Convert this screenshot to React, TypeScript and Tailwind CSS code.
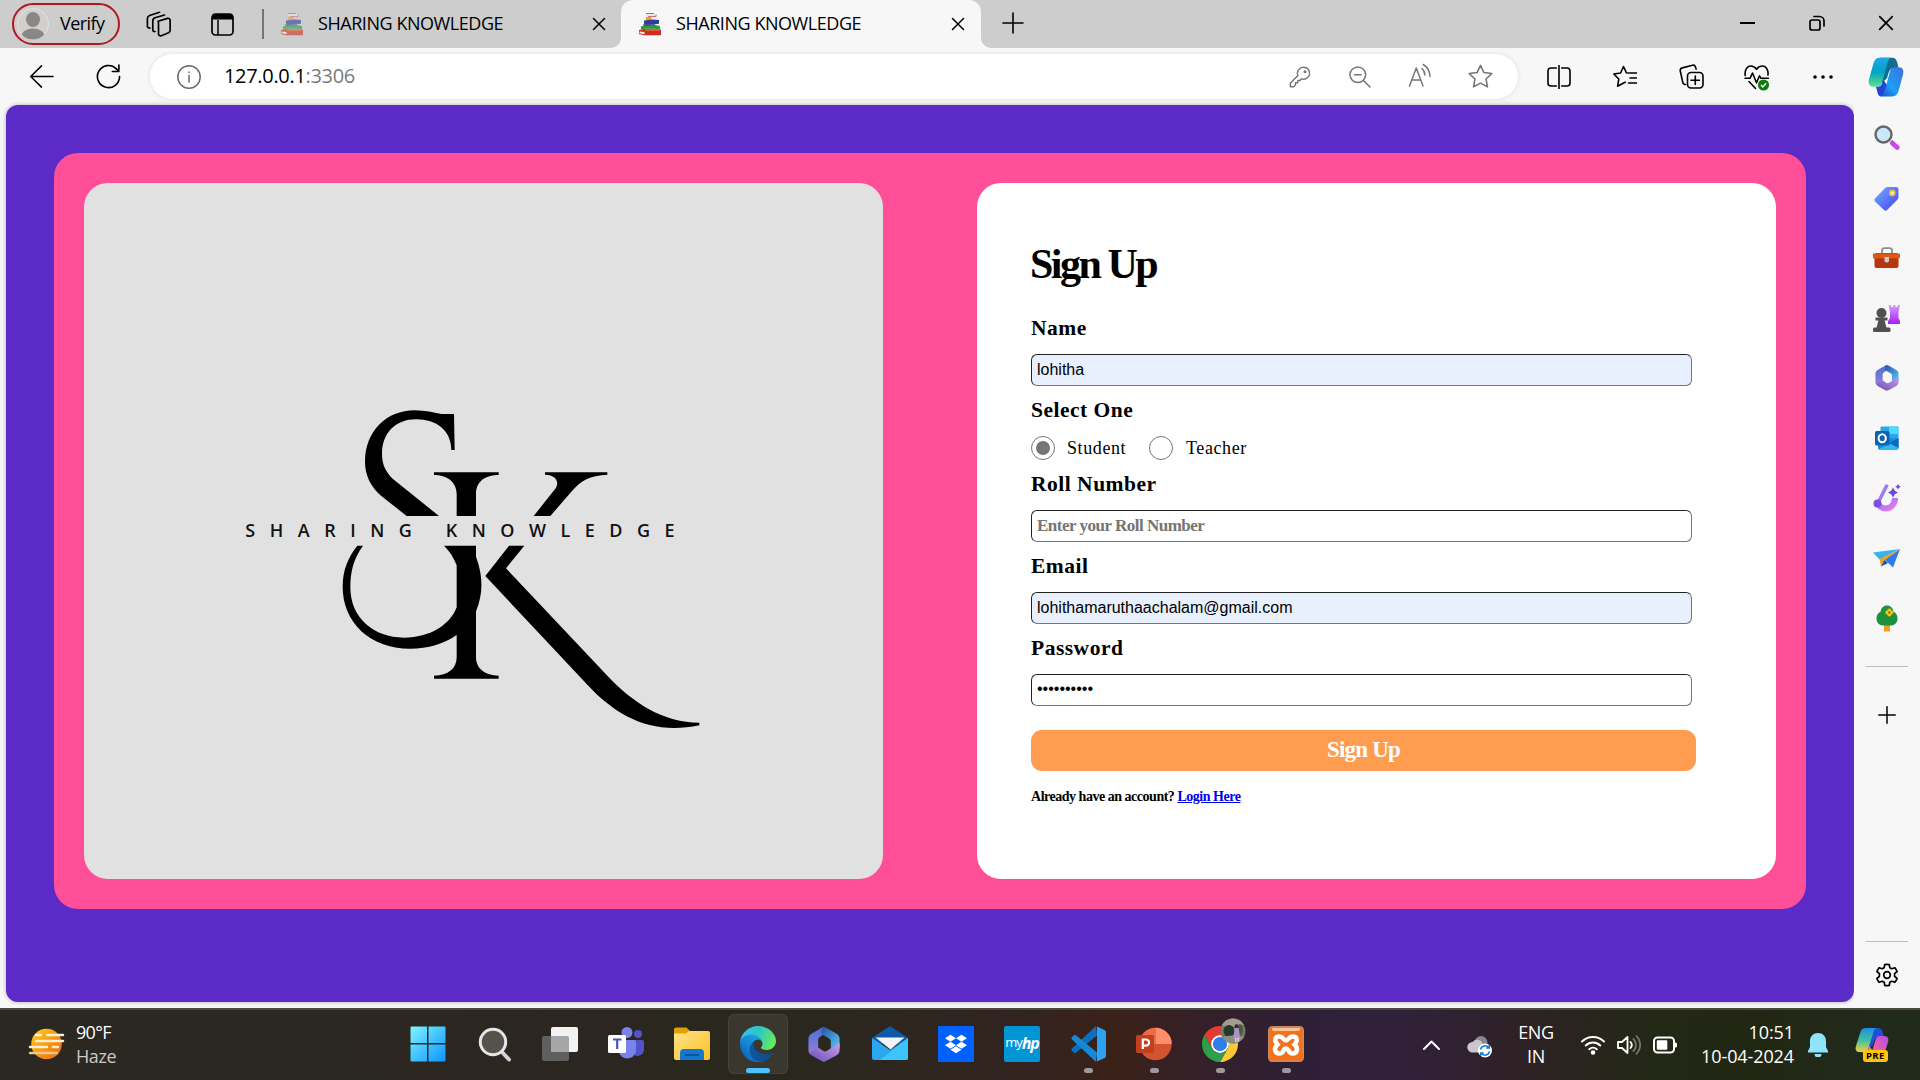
import React from "react";
import { FaDropbox } from "react-icons/fa";

type IconProps = { className?: string; children: React.ReactNode; box?: string; sw?: number };

/* Thin outlined glyph used by the browser chrome. */
function Line({ className = "size-6", children, box = "0 0 24 24", sw = 1.6 }: IconProps) {
  return (
    <svg viewBox={box} className={className} fill="none" stroke="currentColor" strokeWidth={sw} strokeLinecap="round" strokeLinejoin="round">
      {children}
    </svg>
  );
}

function Art({ className = "size-6", children, box = "0 0 24 24" }: IconProps) {
  return (
    <svg viewBox={box} className={className}>
      {children}
    </svg>
  );
}

function Cell({ className, children }: { className: string; children: React.ReactNode }) {
  return <div className={`flex shrink-0 items-center justify-center ${className}`}>{children}</div>;
}

function Books({ className = "" }: { className?: string }) {
  return (
    <Art className={`h-[24px] w-[24px] ${className}`}>
      <path d="M8 1.2h7l3 1v2.6h-8l-2-1z" fill="#f3e3e3" />
      <path d="M8 1.5h8M10 4.6h8V2.6" stroke="#d4607a" strokeWidth="1" fill="none" />
      <path d="M8 5h5l1 3.2H8z" fill="#e9a21d" />
      <path d="M6 8.4l9-.9 6 .6v3.6l-13 1.2-2-1.4z" fill="#2b3f9a" />
      <path d="M5 12.2h12l1 2.8H6z" fill="#3d4890" />
      <path d="M3 14.2l14-1.2 5 1v3l-15 1.6-4-1.5z" fill="#2b9a3a" />
      <path d="M6 16.8l12 0v1H6z" fill="#e6f0e6" />
      <path d="M1 18l5-1 17 .4v5.8H6l-5-1.2z" fill="#c9301e" />
      <path d="M1.5 19.6l5 .5v2.2l-5-1z" fill="#fbe7e2" />
      <path d="M7 17.4h15v1.6H7z" fill="#e4563d" />
    </Art>
  );
}

function CloseX({ className = "size-3.5" }: { className?: string }) {
  return (
    <Line className={className} box="0 0 14 14" sw={1.5}>
      <path d="M1.5 1.5l11 11M12.5 1.5l-11 11" />
    </Line>
  );
}

function TabStrip() {
  return (
    <div className="flex h-12 shrink-0 items-stretch bg-[#cdcdcd] pl-3">
      <div className="mt-[3px] flex h-[42px] w-[108px] items-center rounded-full border-2 border-[#ae1a1f] pl-[3px]">
        <Art className="size-8" box="0 0 32 32">
          <circle cx="16" cy="16" r="15.5" fill="#d2d0ce" stroke="#e4e2e0" />
          <clipPath id="av"><circle cx="16" cy="16" r="15.5" /></clipPath>
          <g fill="#8a8886" clipPath="url(#av)">
            <ellipse cx="16" cy="11.5" rx="7" ry="7.5" />
            <ellipse cx="16" cy="28.5" rx="11.5" ry="8" />
          </g>
        </Art>
        <span className="mb-px ml-[11px] text-[18px] tracking-[-0.55px]">Verify</span>
      </div>
      <Cell className="w-[78px]">
        <Line className="size-[26px]" box="0 0 26 26" sw={1.7}>
          <path d="M12 10.2l9.5-2.8c1.4-.4 2.6.4 2.6 1.8v10.3c0 1-.5 1.8-1.5 2.2l-7.3 3c-1.4.5-2.8-.3-2.8-1.7V13c0-1.4 0-2.4-.5-2.8z" />
          <path d="M9 20.5c-1.5.3-2.2-.5-2.2-1.8V10c0-1.5.8-2.7 2.2-3.2L18.500 4" />
          <path d="M4 17c-1.5.3-2.6-.6-2.6-2V7.500C1.400 6 2.200 5 3.600 4.500L13.500 1.300" />
        </Line>
      </Cell>
      <Cell className="w-12">
        <Art className="size-[23px]" box="0 0 23 23">
          <rect x="1" y="1" width="21" height="21" rx="3.5" fill="none" stroke="#000" strokeWidth="1.7" />
          <path d="M1 6.500V4a3 3 0 013-3h15a3 3 0 013 3v2.500z" />
          <path d="M7 7v15" stroke="#000" strokeWidth="1.5" />
        </Art>
      </Cell>
      <Cell className="w-[34px]">
        <div className="h-[30px] w-[2px] bg-[#757575]" />
      </Cell>
      <div className="flex w-[341px] items-center pr-[15px]">
        <Books className="opacity-60" />
        <span className="mb-0.5 ml-3.5 text-[18px] tracking-[-0.45px]">SHARING KNOWLEDGE</span>
        <CloseX className="ml-auto size-3.5" />
      </div>
      <div className="relative flex w-[360px] items-center rounded-t-[12px] bg-[#f7f7f7] pr-4 pl-[17px]">
        <Art className="absolute bottom-0 -left-[10px] size-[10px]" box="0 0 10 10">
          <path d="M10 0v10H0A10 10 0 0010 0z" fill="#f7f7f7" />
        </Art>
        <Art className="absolute -right-[10px] bottom-0 size-[10px]" box="0 0 10 10">
          <path d="M0 0v10h10A10 10 0 010 0z" fill="#f7f7f7" />
        </Art>
        <Books />
        <span className="mb-0.5 ml-3.5 text-[18px] tracking-[-0.45px]">SHARING KNOWLEDGE</span>
        <CloseX className="ml-auto size-3.5" />
      </div>
      <Cell className="w-16 pb-0.5">
        <Line className="size-[22px]" box="0 0 22 22">
          <path d="M11 1v20M1 11h20" />
        </Line>
      </Cell>
      <Cell className="ml-auto w-[69px] pb-0.5">
        <div className="h-[2px] w-[15px] bg-black" />
      </Cell>
      <Cell className="w-[69px] pb-0.5">
        <Line className="size-4" box="0 0 16 16" sw={1.7}>
          <rect x="1" y="5" width="10" height="10" rx="2" />
          <path d="M5 1.500h5.500a4.500 4.500 0 014.500 4.500v5" />
        </Line>
      </Cell>
      <Cell className="w-[69px] pb-0.5">
        <CloseX className="size-4" />
      </Cell>
    </div>
  );
}

function Copilot({ id, c }: { id: string; c: string[] }) {
  return (
    <>
      <defs>
        <linearGradient id={`${id}a`} x1="0" y1="0" x2="0" y2="1">
          <stop offset="0" stopColor={c[0]} /><stop offset=".5" stopColor={c[1]} /><stop offset="1" stopColor={c[2]} />
        </linearGradient>
        <linearGradient id={`${id}b`} x1="1" y1="0" x2="0" y2="1">
          <stop offset="0" stopColor={c[3]} /><stop offset=".6" stopColor={c[4]} /><stop offset="1" stopColor={c[5]} />
        </linearGradient>
      </defs>
      <path d="M12 1h12c3 0 4.500 1.500 5.300 4.500L30.500 10H26c-3 0-4.500 1.500-5.500 4.500L19 19l-5 4z" fill={c[6]} />
      <path d="M12 1h12c-2.500 0-3.500 1.500-4.500 4.500L14 23c-.8 2.500-2 3.500-4.500 3.500H5c-4 0-5-3-4-6.500L5.500 6C6.600 2.500 8.500 1 12 1z" fill={`url(#${id}a)`} />
      <path d="M13 35h11c3.500 0 5.500-1.500 6.600-5L35 16c1-3.500 0-6.500-4-6.500h-4.500c-2.500 0-3.700 1-4.500 3.500L16.500 30.500c-1 3-2 4.500-4.500 4.500z" fill={`url(#${id}b)`} />
      <path d="M13 35c-2.500 0-3-1.500-3.700-4L8 26.500h2c2.500 0 3.500-1 4.200-3.500l1-3 3.500 5-2.200 6c-1 3-2 4-3.500 4z" fill={c[5]} />
    </>
  );
}

function Toolbar() {
  return (
    <div className="flex h-[57px] shrink-0 items-center bg-[#f7f7f7] pl-2">
      <Cell className="w-[67px]">
        <Line className="size-[25px]" box="0 0 26 26">
          <path d="M25 13H2M13 2L1.800 13 13 24" />
        </Line>
      </Cell>
      <Cell className="w-[66px]">
        <Line className="size-[25px]" box="0 0 26 26" sw={1.7}>
          <path d="M24.500 13A11.500 11.500 0 1121 4.800L23.500 7.500M23.800 1v6.800H17" />
        </Line>
      </Cell>
      <div className="ml-[9px] flex h-[45px] w-[1368px] items-center rounded-full bg-white pr-2 pl-[27px] shadow-[0_0_5px_rgba(0,0,0,0.1)]">
        <Line className="size-6 text-[#6a6a6a]" sw={1.5}>
          <circle cx="12" cy="12" r="11.2" />
          <path d="M12 10.500v6.500M12 7v.4" />
        </Line>
        <span className="mb-px ml-[23px] text-[20px] tracking-[-0.32px] text-black">
          127.0.0.1<span className="text-[#7a7a7a]">:3306</span>
        </span>
        <div className="ml-auto flex text-[#757575]">
          <Cell className="w-[60px]">
            <Line className="size-[22px]" box="0 0 22 22" sw={1.4}>
              <path d="M14.500 1.200a6 6 0 11-2 11.600L11 14.500H8.800v2.300H6.500v2.200L4.600 20.800H1.300v-3.600L8.900 9.500a6 6 0 015.600-8.300z" />
              <circle cx="16" cy="5.8" r=".8" />
            </Line>
          </Cell>
          <Cell className="w-[60px]">
            <Line className="size-[22px]" box="0 0 22 22" sw={1.5}>
              <circle cx="8.8" cy="8.8" r="7.8" />
              <path d="M14.500 14.500L21 21M5.500 8.800h6.600" />
            </Line>
          </Cell>
          <Cell className="w-[60px] pb-[3px]">
            <Line className="h-6 w-6" box="0 0 24 24" sw={1.5}>
              <path d="M1.500 23L8.300 5l6.700 18M4 17h8.700M13.800 5.500c2 1.400 3 3.800 3 6.500M15.300 1.500c4 2.400 6.500 6.500 6.700 12" />
            </Line>
          </Cell>
          <Cell className="w-[60px]">
            <Star className="size-[25px]" />
          </Cell>
        </div>
      </div>
      <Cell className="ml-2 w-[66px]">
        <Line className="size-6">
          <path d="M9.300 3H4a3 3 0 00-3 3v12a3 3 0 003 3h5.300M14.700 3H20a3 3 0 013 3v12a3 3 0 01-3 3h-5.300M12 .5v23" />
        </Line>
      </Cell>
      <Cell className="w-[66px]">
        <Line className="size-6">
          <path d="M15.500 8h8M17 13h6.500M15.500 18h8M14 8l-.7-.4L10.500 1.500 7.600 8 .8 9l5 5-1.200 7.200 6-3.200 1.600-.8" />
        </Line>
      </Cell>
      <Cell className="w-[66px]">
        <Line className="size-[25px]" box="0 0 25 25">
          <rect x="8.5" y="8.5" width="15.5" height="15.5" rx="3.5" />
          <path d="M16.300 12v8.500M12 16.300h8.500M6.500 20.500c-1.500 0-2.400-.8-2.700-2.200L1.300 7.200C.9 5.500 1.700 4.300 3.300 3.900L13.500 1.200c1.500-.4 2.500.3 3 1.700l.6 2.200" />
        </Line>
      </Cell>
      <Cell className="w-[66px]">
        <Art className="mt-0.5 size-[26px]" box="0 0 26 26">
          <g fill="none" stroke="#000" strokeWidth="1.6" strokeLinejoin="round" strokeLinecap="round">
            <path d="M1.200 10.500C.4 5.500 3 1 6.800 1c2.600 0 4.400 1.300 5.700 3.200C13.800 2.300 15.800 1 18.400 1c3.800 0 6.300 4.500 5.500 9M5 16.500l6.500 7" />
            <path d="M1 13.300h5L8.500 8l4 9.800 3-7 1.500 2.500h7.500" />
          </g>
          <circle cx="19.5" cy="20" r="5.6" fill="#0f7b0f" />
          <path d="M17 20l1.800 1.900 3.300-3.700" fill="none" stroke="#fff" strokeWidth="1.4" />
        </Art>
      </Cell>
      <Cell className="w-[66px]">
        <Art className="h-1 w-5" box="0 0 20 4">
          <circle cx="2" cy="2" r="1.8" /><circle cx="10" cy="2" r="1.8" /><circle cx="18" cy="2" r="1.8" />
        </Art>
      </Cell>
      <Cell className="w-[60px]">
        <Art className="h-[42px] w-9" box="0 0 36 36">
          <g transform="translate(0 -2.500) scale(1 1.140)">
            <Copilot id="cp" c={["#1fa7e8", "#00a3c4", "#5fe08a", "#3f6fe0", "#18a0f5", "#2446d8", "#116d8f"]} />
          </g>
        </Art>
      </Cell>
    </div>
  );
}

function Star({ className }: { className: string }) {
  return (
    <Line className={className} sw={1.5}>
      <path d="M12 1.300l3.300 6.900 7.500 1-5.500 5.200 1.400 7.600L12 18.400 5.300 22l1.400-7.600L1.200 9.200l7.500-1z" />
    </Line>
  );
}

function Hexagon365({ className }: { className: string }) {
  return (
    <Art className={className} box="0 0 32 36">
      <defs>
        <linearGradient id="m1" x1="0" y1="0" x2="0" y2="1"><stop offset="0" stopColor="#4a6fd8" /><stop offset="1" stopColor="#9a7fd6" /></linearGradient>
        <linearGradient id="m2" x1="0" y1="0" x2="1" y2="1"><stop offset="0" stopColor="#2a4ea8" /><stop offset="1" stopColor="#5fd0f5" /></linearGradient>
        <linearGradient id="m3" x1="0" y1="1" x2="1" y2="0"><stop offset="0" stopColor="#6a4fb0" /><stop offset="1" stopColor="#c79cf0" /></linearGradient>
      </defs>
      <path d="M15 0L3 7C1 8.200 0 10 0 12v12c0 2 1 3.500 2.500 4.500L10 24V13.500c0-1.500.5-2.500 2-3.500l6-4V1z" fill="url(#m1)" />
      <path d="M14 1c1.500-1 3-1 4.500 0L29 7c2 1.200 3 3 3 5v10l-9 2V15c0-1.500-.7-2.700-2-3.500L13 7z" fill="url(#m2)" />
      <path d="M1.500 26L10 21l5 3.500c1.300.9 2.700.9 4 0l8-5 5-3v7.500c0 2-1 3.800-3 5L18 35c-1.500.9-3 .9-4.500 0L3 29z" fill="url(#m3)" />
    </Art>
  );
}

function Sidebar() {
  return (
    <div className="flex w-[65px] shrink-0 flex-col items-center bg-[#f7f7f7] pt-[3px]">
      <Cell className="h-[60px]">
        <Art className="size-[26px]" box="0 0 26 26">
          <path d="M17 16l3 2.600" stroke="#8a8a8a" strokeWidth="3" />
          <path d="M18.500 18.300l4.700 4.200" stroke="#c945ec" strokeWidth="4.800" strokeLinecap="round" />
          <circle cx="9.500" cy="9.500" r="8" fill="#c9e8fb" stroke="#666" strokeWidth="2.400" />
        </Art>
      </Cell>
      <Cell className="h-[60px]">
        <Art className="size-[25px]" box="0 0 25 25">
          <defs><linearGradient id="tg" x1="0" y1="0" x2="1" y2="1"><stop offset="0" stopColor="#6cb4ff" /><stop offset="1" stopColor="#4a3df0" /></linearGradient></defs>
          <path d="M13.500 1H22a2.500 2.500 0 012.500 2.500V11c0 1-.3 1.700-1 2.400L13 24c-1 1-2 1-3 0L1 15.500c-.8-.9-.8-2 0-2.900L11 2c.7-.7 1.500-1 2.500-1z" fill="url(#tg)" />
          <circle cx="18.300" cy="7" r="2.400" fill="#e9ecff" stroke="#f2c037" strokeWidth="1.800" />
        </Art>
      </Cell>
      <Cell className="h-[60px]">
        <Art className="size-[27px]" box="0 0 27 27">
          <path d="M9 8V5.500C9 4 10 3.200 11.500 3.200h5C18 3.200 19 4 19 5.500V8" fill="none" stroke="#8d8d8d" strokeWidth="1.800" />
          <rect x="1.500" y="8" width="24" height="15" rx="2" fill="#b8360d" />
          <path d="M0 8.500h27v4.800H0z" fill="#e0571a" />
          <path d="M11.500 12h4.500v4.500l-2.200 1.300-2.300-1.300z" fill="#c9cdd3" />
        </Art>
      </Cell>
      <Cell className="h-[60px]">
        <Art className="size-[27px]" box="0 0 27 27">
          <defs><linearGradient id="rk" x1="0" y1="0" x2="0" y2="1"><stop offset="0" stopColor="#d6a0ff" /><stop offset="1" stopColor="#a61ff0" /></linearGradient></defs>
          <path d="M15.500 0h2.500v2h2V0h2.500v2h2V0H27l-1.500 7v6l1.500 3v3H15v-3l2-3V7z" fill="url(#rk)" />
          <g fill="#505050"><circle cx="8.500" cy="8" r="5" /><path d="M2.500 12.500h12v3h-12z" /><path d="M5.500 15h6l2 8H3.500z" /><rect x="0" y="22.500" width="17.500" height="4.500" rx="1.500" /></g>
        </Art>
      </Cell>
      <Cell className="h-[60px]"><Hexagon365 className="h-[26px] w-6" /></Cell>
      <Cell className="h-[60px]">
        <Art className="size-6">
          <rect x="5.500" y=".5" width="18" height="14" rx="1" fill="#28a8ea" />
          <path d="M14 .5h8.500a1 1 0 011 1V8H14z" fill="#50d9ff" />
          <path d="M3 11l20.500 1.500V22a1.700 1.700 0 01-1.700 1.700H4.700A1.700 1.700 0 013 22z" fill="#1490df" />
          <path d="M23.500 12.500L3.500 23.500H22a1.500 1.500 0 001.500-1.500z" fill="#35b8f1" />
          <path d="M14 17l9.500-5v10z" fill="#1666b8" />
          <rect x="0" y="5" width="14.500" height="14.500" rx="1.500" fill="#0a64b5" />
          <ellipse cx="7.200" cy="12.200" rx="3.600" ry="4" fill="none" stroke="#fff" strokeWidth="2" />
        </Art>
      </Cell>
      <Cell className="h-[60px]">
        <Art className="size-7" box="0 0 28 28">
          <defs><linearGradient id="ds" x1="0" y1="0" x2="1" y2="1"><stop offset="0" stopColor="#8a6cf0" /><stop offset="1" stopColor="#e67cf0" /></linearGradient></defs>
          <path d="M4.500 18a8.500 8.500 0 008 6.500C18 24.500 22 20 22 14" fill="none" stroke="url(#ds)" strokeWidth="6" />
          <path d="M6 17L13.500 2" stroke="#9a7cf5" strokeWidth="3.500" strokeLinecap="round" />
          <circle cx="4.500" cy="19.500" r="4" fill="#7b4fe0" />
          <path d="M20 3.500l1.800 3.200 3.200 1.800-3.200 1.800L20 13.500l-1.800-3.200L15 8.500l3.200-1.800z" fill="#6a45e8" />
          <path d="M25 0l1 1.800 1.800 1-1.800 1-1 1.800-1-1.800-1.800-1 1.800-1z" fill="#6a45e8" />
        </Art>
      </Cell>
      <Cell className="h-[60px]">
        <Art className="h-[19px] w-[27px]" box="0 0 27 19">
          <path d="M0 3.500L27 0 6.500 10.500z" fill="#37b2f2" />
          <path d="M27 0L20 18.500l-8.500-8z" fill="#2f7bea" />
          <path d="M27 0L6.500 10 8 17.500l4-6.500z" fill="#f0a51a" />
          <path d="M8 17.500l3.500-6.500 3.500 3z" fill="#1a4fa8" />
        </Art>
      </Cell>
      <Cell className="h-[60px]">
        <Art className="h-[27px] w-[22px]" box="0 0 22 27">
          <rect x="8" y="18" width="6" height="8.500" fill="#f0a01a" />
          <path d="M11 .5c3.500 0 6 2.500 6.300 6 2.700 1.200 4.200 4 4.200 7 0 3.800-2.700 7-6.500 7H7c-3.800 0-6.500-3.200-6.500-7 0-3 1.500-5.800 4.200-7C5 3 7.500.5 11 .5z" fill="#1d9140" />
          <path d="M13.300 3.500a2 2 0 012 2 2 2 0 012 2 2 2 0 01-2 2 2 2 0 01-2 2 2 2 0 01-2-2 2 2 0 01-2-2 2 2 0 012-2 2 2 0 012-2z" fill="#ffc400" />
          <circle cx="13.300" cy="7.500" r="1.200" fill="#c45a00" />
        </Art>
      </Cell>
      <div className="mt-[18px] h-px w-[42px] bg-[#bdbdbd]" />
      <Line className="mt-[39px] size-[18px]" box="0 0 18 18" sw={1.5}>
        <path d="M9 .8v16.400M.8 9h16.400" />
      </Line>
      <div className="mt-auto h-px w-[42px] bg-[#bdbdbd]" />
      <Line className="mt-[21px] mb-[19px] size-[26px]" box="0 0 26 26" sw={1.7}>
        <path d="M10.800 1.500a12 12 0 014.400 0l.6 3.200 2 1.100 3.100-1.100a12 12 0 012.200 3.800l-2.500 2.200v2.600l2.500 2.200a12 12 0 01-2.200 3.800l-3.100-1.100-2 1.100-.6 3.200a12 12 0 01-4.400 0l-.6-3.200-2-1.100-3.100 1.100a12 12 0 01-2.200-3.800l2.500-2.200v-2.600L2.900 8.500a12 12 0 012.200-3.800l3.100 1.100 2-1.100z" />
        <circle cx="13" cy="12" r="3.300" />
      </Line>
    </div>
  );
}

/* Monogram with the club name running through its middle. */
function Monogram() {
  return (
    <svg viewBox="0 0 1500 1080" className="mt-[207px] ml-[136px] h-[360px] w-[500px]">
      <path d="M702 72H664C640 68 615 61 585 61C498 61 435 125 435 215C435 255 452 290 483 317L560 378H657L518 266C498 246 486 225 486 192C486 128 528 88 588 88C650 88 694 122 694 180H704z" />
      <path d="M642 247H836V255C795 255 768 275 768 312V378H710V312C710 275 680 255 642 255z" />
      <path d="M975 247H1162V254C1110 256 1082 272 1056 303L991 378H941L1007 295C1018 277 1010 255 975 254z" />
      <path d="M412 467H429C400 508 391 545 391 592C391 685 462 743 552 743C630 743 690 705 710 652V526C701 503 690 484 672 467H768V500C790 560 790 610 768 664V802C768 835 795 857 836 857V866H642V857C685 857 710 835 710 802V735C670 762 625 776 570 776C450 776 368 697 368 590C368 540 385 500 412 467z" />
      <path d="M867 467H913L858 535L1160 855C1240 940 1330 998 1438 998V1006C1300 1035 1195 985 1100 882L796 558z" />
      <text x="76" y="440" textLength="1288" lengthAdjust="spacing" fontSize="54" fontWeight="600" fill="#111" className="font-['Open_Sans',sans-serif]">
        SHARING KNOWLEDGE
      </text>
    </svg>
  );
}

const fieldBox =
  "h-8 w-[661px] rounded-[6px] border border-t-[#222] border-r-[#767676] border-b-[#767676] border-l-[#222] px-[5px] outline-none";

function Label({ children }: { children: React.ReactNode }) {
  return <div className="h-7 text-[21.5px] leading-[27px] font-bold tracking-[0.5px]">{children}</div>;
}

function Radio({ checked = false }: { checked?: boolean }) {
  return (
    <span className="flex size-6 items-center justify-center rounded-full border-[1.5px] border-[#767676]">
      {checked && <span className="size-3.5 rounded-full bg-[#767676]" />}
    </span>
  );
}

function SignUpForm() {
  return (
    <div className="flex w-[799px] flex-col rounded-[24px] bg-white pt-[51px] pl-[54px] font-['Liberation_Serif',serif] text-black">
      <h1 className="-ml-px h-[81px] text-[42px] leading-[60px] font-bold tracking-[-2.5px]">Sign Up</h1>
      <div className="flex flex-col gap-[11px]">
        <Label>Name</Label>
        <input readOnly value="lohitha" className={`${fieldBox} bg-[#e8f0fe] font-['Liberation_Sans',sans-serif] text-[16px]`} />
        <Label>Select One</Label>
        <div className="flex h-6 items-center text-[18px] tracking-[0.6px]">
          <Radio checked />
          <span className="ml-3 w-[82px]">Student</span>
          <Radio />
          <span className="ml-[13px]">Teacher</span>
        </div>
        <Label>Roll Number</Label>
        <input readOnly placeholder="Enter your Roll Number" className={`${fieldBox} bg-white text-[17px] font-bold tracking-[-0.5px] placeholder:text-[#757575]`} />
        <Label>Email</Label>
        <input readOnly value="lohithamaruthaachalam@gmail.com" className={`${fieldBox} bg-[#e8f0fe] font-['Liberation_Sans',sans-serif] text-[16px]`} />
        <Label>Password</Label>
        <div className={`${fieldBox} bg-white font-['Liberation_Sans',sans-serif] text-[16px] leading-7`}>••••••••••</div>
      </div>
      <button className="mt-6 h-[41px] w-[665px] rounded-[11px] bg-[#ff9c50] text-[23px] font-bold tracking-[-0.8px] text-white">Sign Up</button>
      <p className="mt-4 text-[14px] leading-5 font-bold tracking-[-0.48px]">
        Already have an account? <a className="text-[#0000ee] underline">Login Here</a>
      </p>
    </div>
  );
}

function Page() {
  return (
    <div className="ml-1.5 flex w-[1848px] flex-col rounded-[12px] bg-[#5c2ac6] px-12 pt-12 shadow-[0_0_4px_rgba(0,0,0,0.3)]">
      <div className="flex h-[756px] justify-between rounded-[24px] bg-[#ff4f98] p-[30px]">
        <div className="w-[799px] rounded-[24px] bg-[#e1e1e1]">
          <Monogram />
        </div>
        <SignUpForm />
      </div>
    </div>
  );
}

function TaskbarApp({ children, state = "" }: { children: React.ReactNode; state?: "" | "open" | "active" }) {
  return (
    <div className="relative flex h-[70px] w-[66px] shrink-0 items-center justify-center pb-[2px]">
      {state === "active" && <div className="absolute top-1 left-[3px] h-[60px] w-[60px] rounded-[6px] border border-white/5 bg-white/8" />}
      <div className="relative">{children}</div>
      {state === "active" && <div className="absolute bottom-[7px] h-[5px] w-6 rounded-full bg-[#4cc2ff]" />}
      {state === "open" && <div className="absolute bottom-[7px] h-[5px] w-[9px] rounded-full bg-[#9d9a9c]" />}
    </div>
  );
}

function TaskbarApps() {
  return (
    <div className="ml-[279px] flex">
      <TaskbarApp>
        <Art className="size-9" box="0 0 36 36">
          <defs><linearGradient id="wn" gradientUnits="userSpaceOnUse" x1="0" y1="0" x2="36" y2="36"><stop offset="0" stopColor="#7df5ff" /><stop offset="1" stopColor="#0a94ff" /></linearGradient></defs>
          <path d="M1.500.5H17V17H.5V1.500a1 1 0 011-1zM18.500.5H34.500a1 1 0 011 1V17h-17zM.5 18.500H17v17H1.500a1 1 0 01-1-1zM18.500 18.500h17v16a1 1 0 01-1 1h-16z" fill="url(#wn)" />
        </Art>
      </TaskbarApp>
      <TaskbarApp>
        <Art className="size-[35px]" box="0 0 35 35">
          <path d="M24 24l8 8.500" stroke="#cfd2d6" strokeWidth="4" strokeLinecap="round" />
          <circle cx="16" cy="15" r="12.700" fill="#55514b" stroke="#e4e6e9" strokeWidth="3" />
        </Art>
      </TaskbarApp>
      <TaskbarApp>
        <Art className="size-9" box="0 0 36 36">
          <rect x="0" y="10" width="27" height="25" rx="2" fill="#5f5f5f" />
          <rect x="9" y="1" width="27" height="25" rx="2" fill="#f2f2f2" />
          <path d="M9 10h16a2 2 0 012 2v14H11a2 2 0 01-2-2z" fill="#a6a6a6" />
        </Art>
      </TaskbarApp>
      <TaskbarApp>
        <Art className="h-9 w-9" box="0 0 36 36">
          <circle cx="30" cy="8" r="4" fill="#4f55c4" />
          <path d="M25 14h9a2 2 0 012 2v8a6.500 6.500 0 01-11 4z" fill="#4f55c4" />
          <circle cx="19" cy="6.500" r="5.500" fill="#7b83eb" />
          <path d="M11 14h15a2 2 0 012 2v9.500a9 9 0 01-17.500 0z" fill="#7b83eb" />
          <rect x="0" y="9" width="18" height="18" rx="1.500" fill="#fff" />
          <path d="M5 13.500h8.500M9.200 13.500V23" stroke="#4b53bc" strokeWidth="2.200" />
        </Art>
      </TaskbarApp>
      <TaskbarApp>
        <Art className="size-9" box="0 0 36 36">
          <defs><linearGradient id="fd" x1="0" y1="0" x2="1" y2="1"><stop offset="0" stopColor="#ffe48a" /><stop offset="1" stopColor="#fbbf24" /></linearGradient></defs>
          <path d="M0 3.500A2 2 0 012 1.500h10.500L16 5v4H0z" fill="#e0a106" />
          <path d="M0 7.500h12l3-2.500h19a2 2 0 012 2v25a2 2 0 01-2 2H2a2 2 0 01-2-2z" fill="url(#fd)" />
          <path d="M6 34V27a4 4 0 014-4h16a4 4 0 014 4v7z" fill="#1476cf" />
          <path d="M11 29h14" stroke="#0b4a8f" strokeWidth="1.600" />
        </Art>
      </TaskbarApp>
      <TaskbarApp state="active">
        <Art className="size-9" box="0 0 256 256">
          <defs>
            <linearGradient id="e1" x1="0" y1="0" x2="1" y2="0"><stop offset="0" stopColor="#0c59a4" /><stop offset="1" stopColor="#114a8b" /></linearGradient>
            <linearGradient id="e2" x1=".8" y1=".3" x2=".2" y2="1"><stop offset="0" stopColor="#1b9de2" /><stop offset=".5" stopColor="#1482d0" /><stop offset="1" stopColor="#0a5cb0" /></linearGradient>
            <linearGradient id="e3" x1="0" y1=".2" x2="1" y2=".5"><stop offset="0" stopColor="#35c1f1" /><stop offset=".5" stopColor="#2fc6c4" /><stop offset="1" stopColor="#66eb5a" /></linearGradient>
          </defs>
          <path fill="url(#e1)" d="M231 190.500c-3.400 1.800-6.900 3.400-10.500 4.700-11.500 4.300-23.600 6.500-35.900 6.500-47.300 0-88.500-32.500-88.500-74.300.1-11.400 6.400-21.900 16.400-27.300-42.800 1.800-53.800 46.400-53.800 72.500 0 73.900 68.100 81.400 82.800 81.400 7.900 0 19.800-2.300 27-4.600l1.300-.4c27.600-9.500 51-28.100 66.600-52.800 1.200-1.900.6-4.300-1.200-5.500-1.300-.8-2.900-.9-4.200-.2z" />
          <path fill="url(#e2)" d="M105.700 241.400c-8.900-5.500-16.600-12.800-22.700-21.300-26.300-36-18.400-86.500 17.600-112.800 3.800-2.700 7.700-5.200 11.900-7.200 3.100-1.500 8.400-4.100 15.500-4 10.100.1 19.600 4.900 25.700 13 4 5.400 6.300 11.900 6.400 18.700 0-.2 24.500-79.600-80-79.600-43.900 0-80 41.700-80 78.200-.2 19.300 4 38.500 12.100 56 27.600 58.800 94.800 87.600 156.400 67.100-21.100 6.600-44.100 3.700-62.900-8.100z" />
          <path fill="url(#e3)" d="M152.300 148.900c-.8 1-3.300 2.500-3.300 5.700 0 2.600 1.700 5.100 4.700 7.200 14.400 10 41.500 8.700 41.600 8.700 10.700 0 21.100-2.900 30.300-8.300 18.800-11 30.400-31.100 30.400-52.900.3-22.400-8-37.300-11.300-43.900C223.500 23.900 177.700 0 128 0 58 0 1 56.200 0 126.200c.5-36.500 36.800-66 80-66 3.500 0 23.500.3 42 10.100 16.300 8.600 24.900 18.900 30.800 29.200 6.200 10.700 7.300 24.100 7.300 29.500 0 5.300-2.700 13.300-7.800 19.900z" />
        </Art>
      </TaskbarApp>
      <TaskbarApp><Hexagon365 className="h-[35px] w-8" /></TaskbarApp>
      <TaskbarApp>
        <Art className="size-9" box="0 0 36 36">
          <path d="M0 12L18 0l18 12v6H0z" fill="#0c5ba8" />
          <path d="M0 12l18 12 18-12v20a2 2 0 01-2 2H2a2 2 0 01-2-2z" fill="#2aa7ee" />
          <path d="M36 12L8 34h26a2 2 0 002-2z" fill="#3cc4fb" />
          <path d="M3.500 11.500h29L18.500 23.500z" fill="#f1f4f8" />
        </Art>
      </TaskbarApp>
      <TaskbarApp>
        <div className="flex size-9 items-center justify-center bg-[#0061fe]"><FaDropbox className="size-[22px] text-white" /></div>
      </TaskbarApp>
      <TaskbarApp>
        <div className="flex size-9 items-center justify-center rounded-[2px] bg-[#0096d6] pb-0.5 font-['Open_Sans',sans-serif] text-[13px] tracking-[-1px] text-white">
          my<span className="text-[16px] font-bold italic">hp</span>
        </div>
      </TaskbarApp>
      <TaskbarApp state="open">
        <Art className="size-9" box="0 0 36 36">
          <path d="M26 0L2 22.500c-.8.700-.8 1.700 0 2.400L4 26.700c.6.500 1.400.5 2 0L27 9.500z" fill="#0a6fbf" />
          <path d="M26 36L2 13.500c-.8-.7-.8-1.700 0-2.400L4 9.300c.6-.5 1.400-.5 2 0L27 26.500z" fill="#1688d6" />
          <path d="M26 0l8.500 4c1 .5 1.500 1.200 1.500 2.300v23.400c0 1.100-.5 1.800-1.500 2.300L26 36c1 0 1-1 1-2V2c0-1 0-2-1-2z" fill="#2ba3f2" />
        </Art>
      </TaskbarApp>
      <TaskbarApp state="open">
        <Art className="size-9" box="0 0 36 36">
          <circle cx="19.500" cy="18" r="16.200" fill="#d35230" />
          <path d="M19.500 1.800A16.200 16.200 0 0135.700 18H19.500z" fill="#ff8f6b" />
          <path d="M19.500 1.800V18H3.300A16.200 16.200 0 0119.500 1.800z" fill="#ed6c47" />
          <rect x="0" y="9" width="18" height="18" rx="1.500" fill="#c2401f" />
          <path d="M6.800 23V13.500H10a3 3 0 010 6.200H6.800" fill="none" stroke="#fff" strokeWidth="2.200" />
        </Art>
      </TaskbarApp>
      <TaskbarApp state="open">
        <Art className="size-9" box="0 0 48 48">
          <path d="M24 12H44.780A24 24 0 003.220 12L13.600 30A12 12 0 0124 12z" fill="#e33b2e" />
          <path d="M34.400 30L24 48A24 24 0 0044.780 12H24A12 12 0 0134.400 30z" fill="#fcc934" />
          <path d="M13.600 30L3.220 12A24 24 0 0024 48L34.400 30A12 12 0 0113.600 30z" fill="#2c9f48" />
          <circle cx="24" cy="24" r="12" fill="#fff" />
          <circle cx="24" cy="24" r="9.500" fill="#2f7de9" />
        </Art>
        <Art className="absolute -top-2 left-[18px] size-[26px]" box="0 0 26 26">
          <clipPath id="ph"><circle cx="13" cy="13" r="12.500" /></clipPath>
          <g clipPath="url(#ph)">
            <path d="M0 0h26v26H0z" fill="#6f7a68" />
            <path d="M0 0h26v6q-13 5-26 1z" fill="#a39c91" />
            <ellipse cx="9" cy="13" rx="5.500" ry="6" fill="#263a28" />
            <ellipse cx="20" cy="12" rx="3" ry="6" fill="#4a5a45" />
            <path d="M0 19q13-3 26 0v8H0z" fill="#8b8e80" />
            <ellipse cx="16.500" cy="8.500" rx="2" ry="2.500" fill="#3b3230" />
            <path d="M14.500 10h4l2 11h-7z" fill="#b08fc4" />
            <path d="M15 20h1.500v4H15zM17.500 20H19v4h-1.500z" fill="#e0cfcf" />
          </g>
        </Art>
      </TaskbarApp>
      <TaskbarApp state="open">
        <Art className="size-9" box="0 0 36 36">
          <rect x=".7" y=".7" width="34.600" height="34.600" rx="3.500" fill="#f3711d" stroke="#c98a60" strokeWidth="1.400" />
          <path d="M4 2h28v1a2 2 0 01-2 2H6a2 2 0 01-2-2z" fill="#f9c39b" />
          <path
            d="M11.500 10.500C6.500 10.500 6 15 9.500 18.500C5.500 22 6.500 27.500 11.500 27.500C16 27.500 15 22.500 18 22.500S20 27.500 24.500 27.500C29.500 27.500 30.500 22 26.500 18.500C30 15 29.500 10.500 24.500 10.500C20.500 10.500 20.500 14.500 18 14.500S15.500 10.500 11.500 10.500z"
            fill="none"
            stroke="#fff"
            strokeWidth="4.400"
          />
        </Art>
      </TaskbarApp>
    </div>
  );
}

function Tray() {
  return (
    <div className="ml-auto flex w-[516px] items-center text-white">
      <Cell className="w-[54px]">
        <Line className="h-[10px] w-[17px]" box="0 0 17 10" sw={2}><path d="M1 9l7.500-7.500L16 9" /></Line>
      </Cell>
      <Cell className="w-[42px]">
        <Art className="mt-0.5 h-[23px] w-[25px]" box="0 0 25 23">
          <circle cx="14" cy="7.500" r="6.500" fill="#8b8790" />
          <path d="M5.500 17.500a5 5 0 010-10.500A6 6 0 0116 10l1 7.500z" fill="#c9c7cc" />
          <circle cx="18" cy="15.500" r="7" fill="#fff" />
          <path d="M13.500 14.500a4.700 4.700 0 018.300-1.800M22.500 16.500a4.700 4.700 0 01-8.300 1.800M22.300 10v3h-3M13.700 21v-3h3" fill="none" stroke="#1279d6" strokeWidth="1.500" />
        </Art>
      </Cell>
      <div className="mb-[3px] w-[72px] text-center text-[18px] leading-6 tracking-[-0.4px]">ENG<br />IN</div>
      <Cell className="ml-[3px] w-9">
        <Line className="h-5 w-6" box="0 0 24 20" sw={2}>
          <path d="M1 6.500a15.500 15.500 0 0122 0M4.800 10.500a10.200 10.200 0 0114.400 0M8.300 14.200a5.300 5.300 0 017.400 0" />
          <circle cx="12" cy="17.500" r="1.300" fill="#fff" />
        </Line>
      </Cell>
      <Cell className="w-9">
        <Art className="h-5 w-6" box="0 0 24 20">
          <g fill="none" strokeWidth="1.800" strokeLinejoin="round" strokeLinecap="round">
            <path d="M1 7v6h4l5.500 5V2L5 7zM13.500 7a4.500 4.500 0 010 6" stroke="#fff" />
            <path d="M16.500 4a8.500 8.500 0 010 12M19.500 1.200a12.500 12.500 0 010 17.600" stroke="#77786c" />
          </g>
        </Art>
      </Cell>
      <Cell className="w-9">
        <Art className="h-[18px] w-6" box="0 0 24 18">
          <rect x="1" y="1.500" width="20" height="15" rx="3.500" fill="none" stroke="#fff" strokeWidth="2" />
          <rect x="3.800" y="4.300" width="10.500" height="9.400" rx="1" fill="#fff" />
          <path d="M22 6.500h.5a1.500 1.500 0 011.500 1.500v2a1.500 1.500 0 01-1.500 1.500H22z" fill="#fff" />
        </Art>
      </Cell>
      <div className="mb-[3px] w-[111px] text-right text-[18px] leading-6 tracking-[-0.1px]">10:51<br />10-04-2024</div>
      <Cell className="ml-[12px] w-6">
        <Art className="h-6 w-5" box="0 0 20 24">
          <path d="M10 0c4.600 0 8 3.500 8 8v6l2 4v1.500H0V18l2-4V8c0-4.500 3.400-8 8-8zM6.500 21h7a3.500 3.500 0 01-7 0z" fill="#8fe3fd" />
        </Art>
      </Cell>
      <Cell className="relative ml-[24px] w-9">
        <Art className="mb-[3px] h-[34px] w-[34px]" box="0 0 36 36">
          <Copilot id="cq" c={["#1a8fe8", "#3fc0a0", "#f0d040", "#b04df0", "#f060a0", "#f07f5a", "#1d4fd8"]} />
        </Art>
        <span className="absolute top-[23px] left-[9px] rounded-[3px] bg-[#ffc20e] px-[3px] text-[9.5px] leading-[12px] font-bold tracking-[0.4px] text-black">PRE</span>
      </Cell>
    </div>
  );
}

function Taskbar() {
  return (
    <div className="flex h-[72px] shrink-0 items-center border-t-2 border-[#4a4841] bg-[linear-gradient(90deg,#2b2722_0%,#2b2720_33%,#2a271e_43%,#332320_54%,#3b2118_58%,#33202a_63%,#2f1f36_68%,#31203a_73%,#2e2226_79%,#232816_86%,#222714_92%,#212b1c_98%)] pl-[28px]">
      <Art className="mb-[3px] h-8 w-[37px]" box="0 0 37 32">
        <defs><linearGradient id="sn" x1="0" y1="0" x2="1" y2="1"><stop offset="0" stopColor="#ffd21c" /><stop offset="1" stopColor="#ee6212" /></linearGradient></defs>
        <circle cx="18.500" cy="16" r="15.300" fill="url(#sn)" />
        <g stroke="#fdf0cf" strokeWidth="2.500" strokeLinecap="round">
          <path d="M8 7h5M19 7h16M8 13h27M2 19h17M25 19h5" /><path d="M2 25h27" stroke="#e8c98a" />
        </g>
      </Art>
      <div className="mb-[3px] ml-[11px] w-[40px] text-[18px] leading-6 tracking-[-0.7px] whitespace-nowrap text-white">
        90°F<div className="tracking-[-0.4px] text-[#cbc9c6]">Haze</div>
      </div>
      <TaskbarApps />
      <Tray />
    </div>
  );
}

export default function App() {
  return (
    <div className="flex h-[1080px] w-[1920px] flex-col overflow-hidden bg-[#f7f7f7] font-['Open_Sans','Noto_Sans',sans-serif] text-black">
      <TabStrip />
      <Toolbar />
      <div className="flex h-[903px] shrink-0">
        <div className="flex h-[897px]"><Page /></div>
        <Sidebar />
      </div>
      <Taskbar />
    </div>
  );
}
